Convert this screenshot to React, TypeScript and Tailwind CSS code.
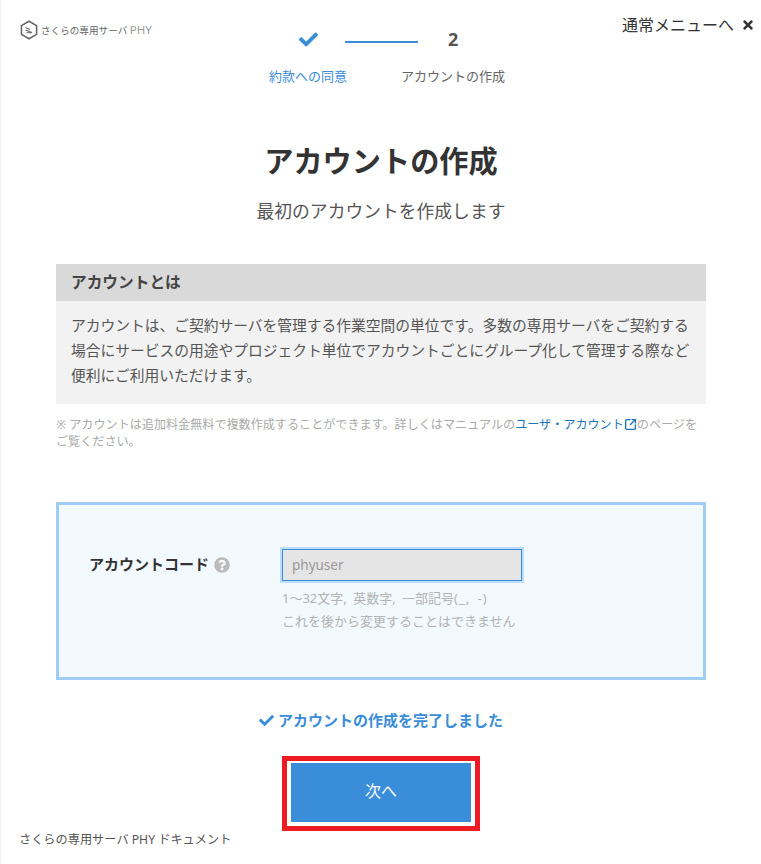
import React from 'react';
import { FaCheck, FaTimes, FaQuestionCircle } from 'react-icons/fa';
import { SquareArrowOutUpRight } from 'lucide-react';

const Logo: React.FC = () => (
  <svg width="18" height="20" viewBox="0 0 18 20" fill="none" className="shrink-0">
    <path d="M9 1.2 16.6 5.6V14.4L9 18.8 1.4 14.4V5.6Z" stroke="#666" strokeWidth="1.6" />
    <path d="M5.5 7.5 10 9.5M5.5 10 12 12.6M6.5 12.8 11.5 12.8" stroke="#666" strokeWidth="1.1" />
  </svg>
);

const App: React.FC = () => {
  return (
    <div className="w-[761px] h-[864px] overflow-hidden bg-white border-l border-[#eeeeee] text-[#333333] font-['Noto_Sans','Noto_Sans_CJK_JP',sans-serif]">
      {/* Header */}
      <div className="grid grid-cols-[268px_236px_1fr] h-[90px]">
        <div className="flex items-center gap-[3px] pl-[19px] pt-[20px] h-[40px]">
          <Logo />
          <span className="text-[9.6px] leading-none text-[#666666] whitespace-nowrap">
            さくらの専用サーバ <span className="text-[#999999] text-[11.5px]">PHY</span>
          </span>
        </div>
        <div>
          <div className="flex items-center h-[20px] mt-[29px] pl-[30px]">
            <FaCheck className="text-[#3a8dd8] text-[19px]" />
            <div className="w-[73px] h-[2px] bg-[#3a8dd8] ml-[27px] mt-[5px]" />
            <span className="ml-[30px] w-[12px] text-[18px] font-bold text-[#555555] leading-none">2</span>
          </div>
          <div className="flex justify-between mt-[17px] text-[13px] leading-[20px] whitespace-nowrap">
            <span className="text-[#3a8dd8]">約款への同意</span>
            <span className="text-[#666666]">アカウントの作成</span>
          </div>
        </div>
        <div className="flex items-center justify-end gap-[7px] pr-[6px] pt-[10px] h-[40px] text-[16px] whitespace-nowrap">
          <span>通常メニューへ</span>
          <FaTimes className="text-[14px] text-[#333333]" />
        </div>
      </div>

      {/* Heading */}
      <div className="text-center">
        <h1 className="mt-[47px] text-[29.2px] leading-[48px] font-bold text-[#333333]">アカウントの作成</h1>
        <p className="mt-[13px] text-[17.8px] leading-[26px] text-[#555555]">最初のアカウントを作成します</p>
      </div>

      <div className="mx-[55px] w-[650px]">
        {/* Description */}
        <div className="mt-[40px] bg-[#f2f2f2]">
          <div className="h-[37px] flex items-center px-[15px] bg-[#d9d9d9] text-[15.7px] font-bold text-[#444444]">アカウントとは</div>
          <p className="h-[103px] px-[15px] pt-[12px] text-[14.75px] leading-[25px] text-[#555555] whitespace-nowrap">
            アカウントは、ご契約サーバを管理する作業空間の単位です。多数の専用サーバをご契約する<br />
            場合にサービスの用途やプロジェクト単位でアカウントごとにグループ化して管理する際など<br />
            便利にご利用いただけます。
          </p>
        </div>
        <p className="mt-[12px] text-[12.1px] leading-[17px] text-[#aaaaaa] whitespace-nowrap">
          ※ アカウントは追加料金無料で複数作成することができます。詳しくはマニュアルの
          <span className="text-[#1a75bb]">ユーザ・アカウント</span>
          <SquareArrowOutUpRight className="inline-block w-[13px] h-[13px] text-[#1a75bb] align-[-2px]" strokeWidth={2.5} />
          のページを<br />
          ご覧ください。
        </p>

        {/* Form */}
        <div className="mt-[52px] h-[178px] border-[3px] border-[#9fcdf5] bg-[#f2f9ff] flex pt-[44px] pl-[30px]">
          <div className="w-[193px] flex items-start gap-[5px] pt-[3px] text-[15px] leading-[24px] font-bold text-[#333333] whitespace-nowrap">
            アカウントコード
            <FaQuestionCircle className="text-[16px] text-[#bbbbbb] mt-[5px]" />
          </div>
          <div>
            <div className="w-[240px] h-[32px] flex items-center px-[9px] border border-[#3a8dd8] ring-2 ring-[#bcdcf7] bg-[#e5e5e5] text-[13.5px] text-[#999999]">phyuser</div>
            <p className="mt-[6px] text-[13px] leading-[23px] text-[#b3b3b3] whitespace-nowrap">
              <span className="[word-spacing:3px]">1〜32文字, 英数字, 一部記号<span className="tracking-[1px]">(_, -)</span></span><br />
              これを後から変更することはできません
            </p>
          </div>
        </div>

        {/* Completed */}
        <div className="mt-[28px] flex items-center justify-center gap-[4px] text-[15px] leading-[24px] font-bold text-[#3a8dd8]">
          <FaCheck className="text-[15px]" />
          <span>アカウントの作成を完了しました</span>
        </div>

        {/* Next */}
        <div className="flex justify-center mt-[24px]">
          <div className="border-[5px] border-[#ed1c24] px-[4px] pt-[2px] pb-[4px] bg-white w-[198px] h-[75px]">
            <button className="w-full h-full pb-[3px] bg-[#3a8dd8] text-white text-[16px]">次へ</button>
          </div>
        </div>
      </div>

      <div className="pl-[18px] text-[12.2px] leading-[18px] text-[#555555]">さくらの専用サーバ PHY ドキュメント</div>
    </div>
  );
};

export default App;
